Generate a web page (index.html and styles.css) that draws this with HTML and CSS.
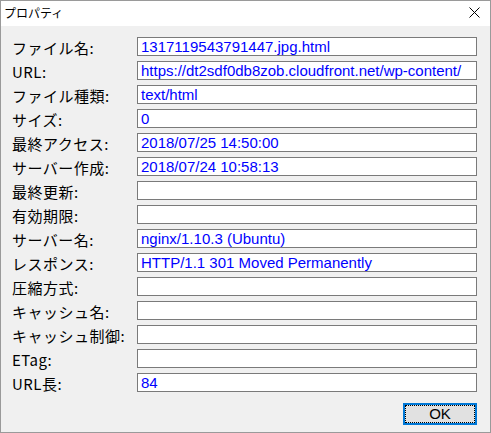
FILE: index.html
```html
<!DOCTYPE html>
<html lang="ja">
<head>
<meta charset="utf-8">
<title>プロパティ</title>
<link rel="stylesheet" href="styles.css">
</head>
<body>
<div class="window">
  <div class="titlebar">
    <span class="title">プロパティ</span>
    <svg class="close" width="11" height="11" viewBox="0 0 11 11"><path d="M0.5 0.5 L10.5 10.5 M10.5 0.5 L0.5 10.5" stroke="#000" stroke-width="1" fill="none"/></svg>
  </div>
  <div class="content">
    <div class="grid">
      <span class="label">ファイル名:</span><div class="field">1317119543791447.jpg.html</div>
      <span class="label">URL:</span><div class="field">https://dt2sdf0db8zob.cloudfront.net/wp-content/</div>
      <span class="label">ファイル種類:</span><div class="field">text/html</div>
      <span class="label">サイズ:</span><div class="field">0</div>
      <span class="label">最終アクセス:</span><div class="field">2018/07/25 14:50:00</div>
      <span class="label">サーバー作成:</span><div class="field">2018/07/24 10:58:13</div>
      <span class="label">最終更新:</span><div class="field"></div>
      <span class="label">有効期限:</span><div class="field"></div>
      <span class="label">サーバー名:</span><div class="field">nginx/1.10.3 (Ubuntu)</div>
      <span class="label">レスポンス:</span><div class="field">HTTP/1.1 301 Moved Permanently</div>
      <span class="label">圧縮方式:</span><div class="field"></div>
      <span class="label">キャッシュ名:</span><div class="field"></div>
      <span class="label">キャッシュ制御:</span><div class="field"></div>
      <span class="label">ETag:</span><div class="field"></div>
      <span class="label">URL長:</span><div class="field">84</div>
    </div>
    <div class="buttons">
      <button class="ok"><span class="focus">OK</span></button>
    </div>
  </div>
</div>
</body>
</html>
```
FILE: styles.css
```css
html, body {
  margin: 0;
  padding: 0;
  background: #f0f0f0;
}
.window {
  width: 491px;
  height: 433px;
  box-sizing: border-box;
  border: 1px solid #9a9a9a;
  background: #f0f0f0;
  display: flex;
  flex-direction: column;
  font-family: "Liberation Sans", "Noto Sans CJK JP", sans-serif;
}
.titlebar {
  height: 25px;
  background: #fff;
  display: flex;
  align-items: center;
  justify-content: space-between;
  padding: 0 10px 0 3px;
}
.title {
  font-family: "Noto Sans CJK JP", sans-serif;
  font-size: 12px;
  color: #000;
  line-height: 1;
  margin-top: -1px;
}
.close {
  display: block;
  margin-top: -2px;
}
.content {
  padding: 11px 13px 0 11px;
  display: flex;
  flex-direction: column;
}
.grid {
  display: grid;
  grid-template-columns: 125px 340px;
  grid-auto-rows: 19px;
  row-gap: 5px;
}
.label {
  font-family: "Noto Sans CJK JP", sans-serif;
  font-size: 15px;
  letter-spacing: 0.5px;
  color: #000;
  line-height: 19px;
  white-space: nowrap;
  padding-top: 1px;
}
.field {
  box-sizing: border-box;
  height: 19px;
  border: 1px solid #7a7a7a;
  background: #fff;
  color: #0000ff;
  font-family: "Liberation Sans", sans-serif;
  font-size: 15px;
  line-height: 17px;
  padding-left: 3px;
  white-space: nowrap;
  overflow: hidden;
}
.buttons {
  display: flex;
  justify-content: flex-end;
  margin-top: 11px;
}
.ok {
  width: 74px;
  height: 22px;
  box-sizing: border-box;
  border: 2px solid #0078d7;
  background: #e1e1e1;
  padding: 0;
  margin: 0;
  display: flex;
}
.focus {
  flex: 1;
  border: 1px dotted #000;
  font-family: "Liberation Sans", sans-serif;
  font-size: 15px;
  line-height: 16px;
  color: #000;
  display: flex;
  align-items: center;
  justify-content: center;
}
```
